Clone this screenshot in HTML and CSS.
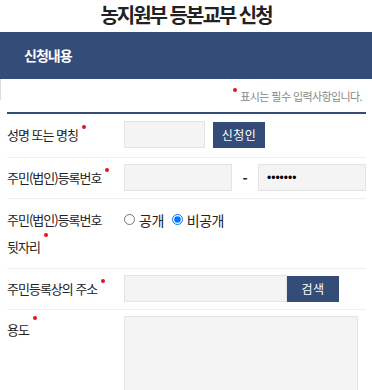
FILE: index.html
```html
<!DOCTYPE html>
<html lang="ko">

<head>
    <meta charset="UTF-8">
    <title>농지원부 등본교부 신청</title>
    <link rel="stylesheet" href="styles.css">
</head>
<body>
    <h2 class="pageTitle">농지원부 등본교부 신청</h2>
    <div class="boxHead">신청내용</div>
    <div class="notice"><span class="req"></span> 표시는 필수 입력사항입니다.</div>
    <div class="form">
        <div class="row">
            <label class="label">성명 또는 명칭<span class="req"></span></label>
            <div class="field">
                <input type="text" class="ipt w80">
                <a href="javascript:;" class="btn">신청인</a>
            </div>
        </div>
        <div class="row">
            <label class="label">주민(법인)등록번호<span class="req"></span></label>
            <div class="field">
                <input type="text" class="ipt w108">
                <span class="dash">-</span>
                <input type="password" class="ipt w108" value="1234567">
            </div>
        </div>
        <div class="row top">
            <label class="label">주민(법인)등록번호<br>뒷자리<span class="req"></span></label>
            <div class="field radios">
                <label><input type="radio" name="open"> 공개</label>
                <label><input type="radio" name="open" checked> 비공개</label>
            </div>
        </div>
        <div class="row">
            <label class="label">주민등록상의 주소<span class="req"></span></label>
            <div class="field">
                <input type="text" class="ipt w163">
                <a href="javascript:;" class="btn nogap">검색</a>
            </div>
        </div>
        <div class="row top last">
            <label class="label">용도<span class="req"></span></label>
            <div class="field">
                <textarea class="area"></textarea>
            </div>
        </div>
    </div>
</body>
</html>
```

FILE: styles.css
```css
* {
    margin: 0;
    padding: 0;
    box-sizing: border-box;
}
body {
    font-family: "Noto Sans CJK KR", "Noto Sans", sans-serif;
    color: #222;
    background-color: #fff;
}
a {
    text-decoration: none;
}
.pageTitle {
    height: 32px;
    line-height: 30px;
    text-align: center;
    font-size: 20px;
    font-weight: bold;
    letter-spacing: -2px;
    color: #222;
}
.boxHead {
    height: 47px;
    line-height: 47px;
    padding-left: 24px;
    background-color: #344c78;
    color: #fff;
    font-size: 14px;
    font-weight: bold;
    letter-spacing: -1px;
}
.notice {
    height: 33px;
    padding-top: 9px;
    padding-right: 10px;
    text-align: right;
    font-size: 11px;
    letter-spacing: -0.6px;
    color: #888;
    border-left: 1px solid #e4e4e4;
    border-image: linear-gradient(#dcdcdc 62%, #fff 62%) 1;
}
.req {
    display: inline-block;
    width: 4px;
    height: 4px;
    border-radius: 50%;
    background-color: #e0141e;
    vertical-align: top;
    margin-left: 4px;
    margin-top: 0;
}
.notice .req {
    margin-top: 0;
    margin-right: 1px;
}
.form {
    margin: 0 6px 0 7px;
    border-top: 2px solid #344c78;
}
.row {
    display: flex;
    align-items: center;
    padding: 7px 0 9px;
    border-bottom: 1px solid #eee;
}
.row + .row {
    padding: 6px 0 7px;
}
.row.top {
    align-items: flex-start;
    padding: 7px 0 8px;
}
.row.last {
    border-bottom: 0;
    padding-top: 6px;
}
.label {
    width: 117px;
    flex-shrink: 0;
    font-size: 13px;
    letter-spacing: -1px;
    color: #222;
}
.row.top .label {
    line-height: 27px;
}
.field {
    display: flex;
    align-items: center;
    flex: 1;
}
.ipt {
    height: 27px;
    border: 1px solid #e3e3e3;
    background-color: #f4f4f4;
    padding: 0 8px;
    font-size: 12px;
    outline: none;
}
.w80 {
    width: 81px;
}
.w108 {
    width: 108px;
}
.w163 {
    width: 163px;
}
.btn {
    display: inline-block;
    width: 52px;
    height: 26px;
    line-height: 26px;
    margin-left: 8px;
    text-align: center;
    background-color: #344c78;
    color: #fff;
    font-size: 12px;
    letter-spacing: 0.5px;
}
.btn.nogap {
    margin-left: 0;
}
.dash {
    width: 26px;
    text-align: center;
    font-size: 14px;
    font-weight: bold;
}
.radios {
    height: 27px;
    font-size: 14px;
    letter-spacing: -0.5px;
}
.radios label {
    display: flex;
    align-items: center;
    margin-right: 8px;
}
.radios input {
    width: 11px;
    height: 11px;
    margin: 0 4px 0 0;
}
.area {
    display: block;
    width: 234px;
    height: 80px;
    border: 1px solid #e3e3e3;
    background-color: #f4f4f4;
    resize: none;
    outline: none;
}
```
